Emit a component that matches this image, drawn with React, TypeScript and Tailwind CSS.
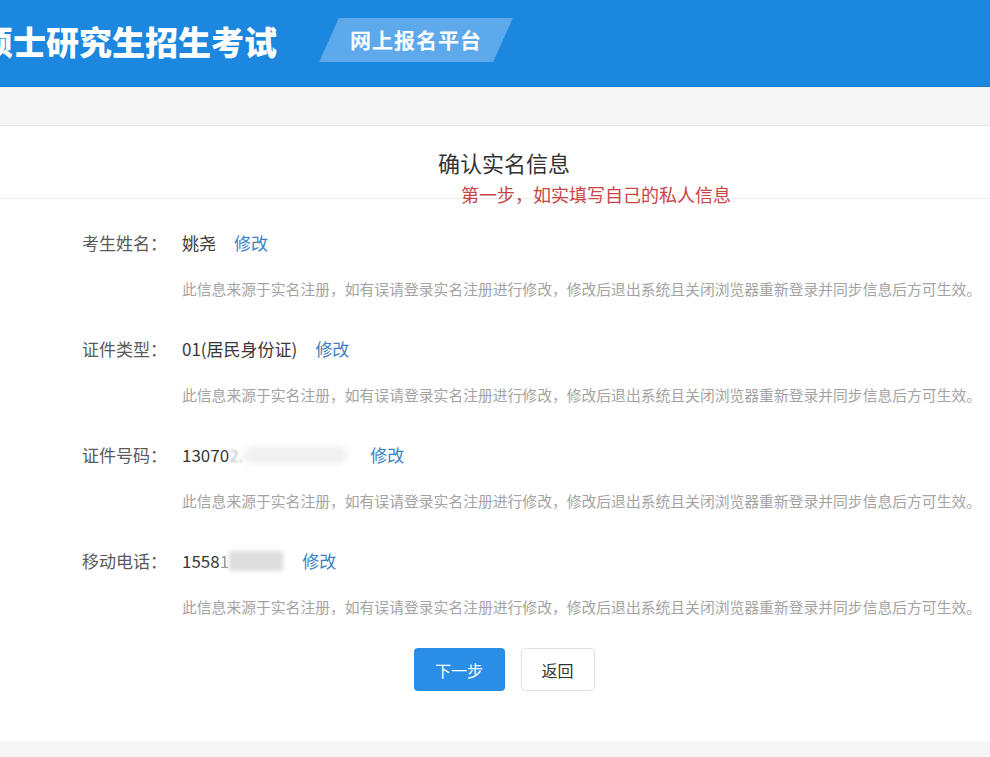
import React from 'react';

const HINT = '此信息来源于实名注册，如有误请登录实名注册进行修改，修改后退出系统且关闭浏览器重新登录并同步信息后方可生效。';

// ================= Row =================
const InfoRow: React.FC<{ label: string; children: React.ReactNode }> = ({ label, children }) => (
  <div className="flex flex-col">
    <div className="flex items-center h-6 text-[17px]">
      <span className="w-[100px] text-[#5a5a5a]">{label}：</span>
      <div className="flex items-center text-[#383838]">{children}</div>
    </div>
    <div className="mt-6 h-5 leading-5 pl-[100px] text-[14.8px] text-[#a3a3a3] whitespace-nowrap">{HINT}</div>
  </div>
);

const EditLink = ({ className = '' }: { className?: string }) => (
  <span className={`text-[#3d7fc6] cursor-pointer ${className}`}>修改</span>
);

export default function App() {
  return (
    <div className="w-[990px] h-[757px] overflow-hidden bg-[#f6f6f6] font-['Noto_Sans_CJK_SC',sans-serif]">
      {/* ================= Header ================= */}
      <div className="h-[87px] bg-[#1c87df] border-b border-[#1776c6] flex items-start pt-[18px] overflow-hidden">
        <h1 className="-ml-[20px] mt-[1px] h-[44px] flex items-center text-[33px] leading-none font-black text-white whitespace-nowrap">
          硕士研究生招生考试
        </h1>
        <div className="ml-[52px] w-[174px] h-[44px] -skew-x-[24deg] bg-[#5ea9ec] flex items-center justify-center">
          <span className="skew-x-[24deg] text-white text-[21px] font-bold tracking-[1px]">网上报名平台</span>
        </div>
      </div>

      <div className="h-[38px]" />

      {/* ================= Card ================= */}
      <div className="bg-white border-t border-[#e6e6e6] h-[616px] relative">
        <div className="h-[73px] border-b border-[#ececec] flex items-center justify-center pl-[18px]">
          <span className="text-[22px] text-[#333]">确认实名信息</span>
        </div>
        <span className="absolute left-[461px] top-[59px] text-[18px] leading-none text-[#c94444] whitespace-nowrap">
          第一步，如实填写自己的私人信息
        </span>

        <div className="pl-[82px] pt-[32px] flex flex-col gap-[38px]">
          <InfoRow label="考生姓名">
            <span>姚尧</span>
            <EditLink className="ml-[18px]" />
          </InfoRow>
          <InfoRow label="证件类型">
            <span>01(居民身份证)</span>
            <EditLink className="ml-[18px]" />
          </InfoRow>
          <InfoRow label="证件号码">
            <span>13070</span>
            <span className="text-[#bbb] blur-[1px]">2.</span>
            <span className="w-[105px] h-[18px] bg-[#f1f1f1] blur-[3px] rounded-full" />
            <EditLink className="ml-[22px]" />
          </InfoRow>
          <InfoRow label="移动电话">
            <span>1558</span>
            <span className="text-[#999] blur-[0.5px]">1</span>
            <span className="w-[54px] h-[20px] bg-[#dedede] blur-[2px]" />
            <EditLink className="ml-[19px]" />
          </InfoRow>
        </div>

        {/* ================= Buttons ================= */}
        <div className="mt-[31px] flex justify-center gap-4 pl-[18px]">
          <button className="w-[91px] h-[43px] rounded bg-[#2a8ee6] text-white text-[16px]">下一步</button>
          <button className="w-[74px] h-[43px] rounded border border-[#e2e2e2] bg-white text-[#333] text-[16px]">返回</button>
        </div>
      </div>
    </div>
  );
}
